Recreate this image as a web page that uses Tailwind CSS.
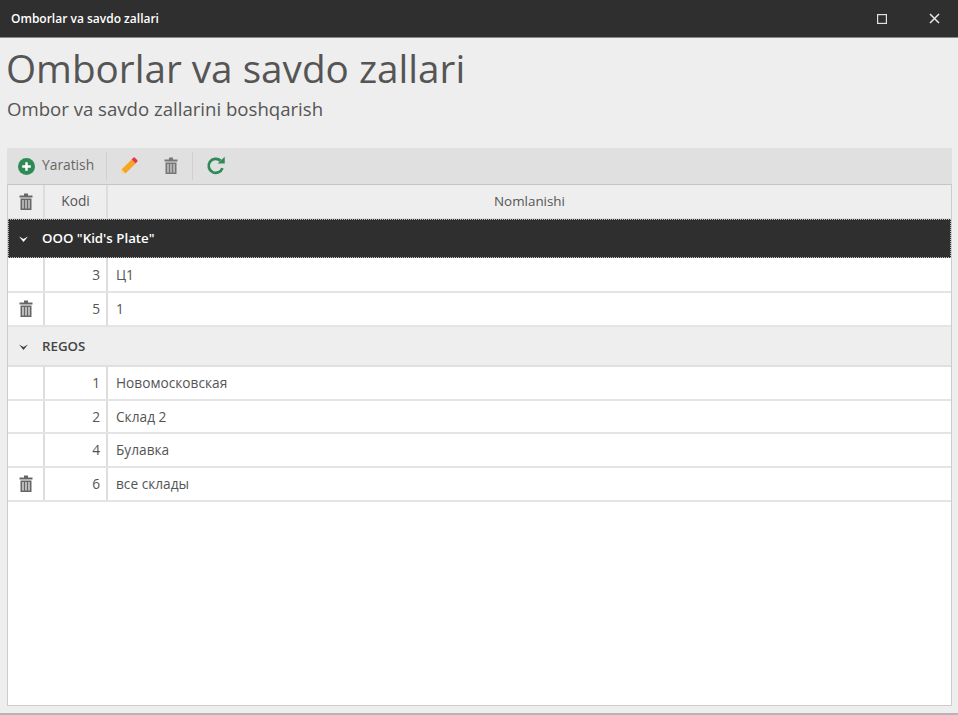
<!DOCTYPE html>
<html lang="en">
<head>
  <meta charset="UTF-8" />
  <title>Omborlar va savdo zallari</title>
  <script src="https://cdn.jsdelivr.net/npm/@tailwindcss/browser@4"></script>
</head>
<body class="w-[958px] h-[715px] overflow-hidden bg-[#eeeeee] font-['Open_Sans','Noto_Sans',sans-serif] text-[#555555] flex flex-col">
  <!-- title bar -->
  <div class="h-[38px] shrink-0 bg-[#2f2f2f] border-b border-[#8a8a8a] flex items-center justify-between pl-[11px] pr-[18px]">
    <span class="text-[12px] font-semibold text-white">Omborlar va savdo zallari</span>
    <div class="flex items-center gap-[42px]">
      <svg width="10" height="10" viewBox="0 0 10 10" fill="none" stroke="#e0e0e0" stroke-width="1.2"><rect x="0.6" y="0.6" width="8.8" height="8.8"/></svg>
      <svg width="11" height="11" viewBox="0 0 11 11" fill="none" stroke="#e8e8e8" stroke-width="1.5"><path d="M1 1l9 9M10 1l-9 9"/></svg>
    </div>
  </div>

  <div class="flex-1 flex flex-col pl-[7px] pr-[6px] min-h-0">
    <h1 class="text-[38.7px] leading-[52px] mt-[4px] -ml-[1px] text-[#555555]">Omborlar va savdo zallari</h1>
    <p class="text-[18.6px] leading-[26px] mt-[2px] text-[#555555]">Ombor va savdo zallarini boshqarish</p>

    <!-- toolbar -->
    <div class="mt-[26px] h-[36px] shrink-0 bg-[#e0e0e0] flex items-center text-[13.8px]">
      <div class="w-[100px] h-[28px] flex items-center pl-[11px] gap-[7px] border-r border-[#d0d0d0]">
        <svg width="17" height="17" viewBox="0 0 17 17"><circle cx="8.5" cy="8.5" r="8.5" fill="#2e8b57"/><path d="M8.5 4.2v8.6M4.2 8.5h8.6" stroke="#fff" stroke-width="2.4"/></svg>
        <span class="text-[#666666] pb-[2px]">Yaratish</span>
      </div>
      <div class="w-[86px] h-[28px] flex items-center pl-[12px] gap-[25px] border-r border-[#d0d0d0]">
        <svg width="20" height="20" viewBox="0 0 20 20"><path d="M1.5 18.5l1-5 4 4z" fill="#f0d9a8"/><path d="M2.5 13.5L12.6 3.4l4 4L6.5 17.5z" fill="#f5a623"/><path d="M12.6 3.4l1.6-1.6a1.2 1.2 0 0 1 1.7 0l2.3 2.3a1.2 1.2 0 0 1 0 1.7l-1.6 1.6z" fill="#e8334a"/></svg>
        <svg width="14" height="18" viewBox="0 0 14 18"><path d="M5 1.5h4M0.5 3.5h13" stroke="#777" stroke-width="2"/><path d="M1.5 5.5h11V17h-11z" fill="#777"/><path d="M4 7v8.5M7 7v8.5M10 7v8.5" stroke="#e0e0e0" stroke-width="1.1"/></svg>
      </div>
      <div class="pl-[13px] flex items-center">
        <svg width="20" height="20" viewBox="0 0 19 19" fill="none"><path d="M15.6 11.5A6.7 6.7 0 1 1 13.8 4.4" stroke="#2e8b57" stroke-width="2.6"/><path d="M11 7.2h6.8V0.6z" fill="#2e8b57"/></svg>
      </div>
    </div>

    <!-- grid -->
    <div class="h-[522px] shrink-0 bg-white border border-[#cccccc] border-t-[#c4c4c4] text-[13.7px] text-[#555555]">
      <div class="h-[34px] flex bg-[#eeeeee] border-b border-[#dddddd]">
        <div class="w-[37px] border-r-[2px] border-[#dddddd] flex items-center justify-center">
          <svg width="14" height="18" viewBox="0 0 14 18"><path d="M5 1.5h4M0.5 3.5h13" stroke="#666" stroke-width="2"/><path d="M1.5 5.5h11V17h-11z" fill="#666"/><path d="M4 7v8.5M7 7v8.5M10 7v8.5" stroke="#eee" stroke-width="1.1"/></svg>
        </div>
        <div class="w-[63px] border-r-[2px] border-[#dddddd] flex items-center justify-center">Kodi</div>
        <div class="flex-1 flex items-center justify-center text-[13.4px]">Nomlanishi</div>
      </div>

      <div class="h-[39px] bg-[#2f2f2f] border border-dotted border-[#bbbbbb] flex items-center text-white font-semibold text-[13.3px]">
        <svg class="ml-[10px] mr-[14px]" width="9" height="6" viewBox="0 0 9 6"><path d="M0 0.5L4.5 3 9 0.5 4.5 6z" fill="#ffffff"/></svg>
        <span>OOO "Kid's Plate"</span>
      </div>
      <div class="h-[35px] flex border-b-[2px] border-[#e4e4e4]">
        <div class="w-[37px] border-r-[2px] border-[#dddddd]"></div>
        <div class="w-[63px] border-r-[2px] border-[#dddddd] flex items-center justify-end pr-[6px] pt-[1px]">3</div>
        <div class="flex-1 flex items-center pl-[8px] pt-[1px]">Ц1</div>
      </div>
      <div class="h-[34px] flex border-b-[2px] border-[#e4e4e4]">
        <div class="w-[37px] border-r-[2px] border-[#dddddd] flex items-center justify-center">
          <svg width="14" height="18" viewBox="0 0 14 18"><path d="M5 1.5h4M0.5 3.5h13" stroke="#666" stroke-width="2"/><path d="M1.5 5.5h11V17h-11z" fill="#666"/><path d="M4 7v8.5M7 7v8.5M10 7v8.5" stroke="#fff" stroke-width="1.1"/></svg>
        </div>
        <div class="w-[63px] border-r-[2px] border-[#dddddd] flex items-center justify-end pr-[6px] pt-[1px]">5</div>
        <div class="flex-1 flex items-center pl-[8px] pt-[1px]">1</div>
      </div>

      <div class="h-[40px] bg-[#eeeeee] border-b-[2px] border-[#e0e0e0] flex items-center pt-[1px] font-semibold text-[13.3px] text-[#444444]">
        <svg class="ml-[11px] mr-[14px]" width="9" height="6" viewBox="0 0 9 6"><path d="M0 0.5L4.5 3 9 0.5 4.5 6z" fill="#444444"/></svg>
        <span>REGOS</span>
      </div>
      <div class="h-[34px] flex border-b-[2px] border-[#e4e4e4]">
        <div class="w-[37px] border-r-[2px] border-[#dddddd]"></div>
        <div class="w-[63px] border-r-[2px] border-[#dddddd] flex items-center justify-end pr-[6px] pt-[1px]">1</div>
        <div class="flex-1 flex items-center pl-[8px] pt-[1px]">Новомосковская</div>
      </div>
      <div class="h-[33px] flex border-b-[2px] border-[#e4e4e4]">
        <div class="w-[37px] border-r-[2px] border-[#dddddd]"></div>
        <div class="w-[63px] border-r-[2px] border-[#dddddd] flex items-center justify-end pr-[6px] pt-[1px]">2</div>
        <div class="flex-1 flex items-center pl-[8px] pt-[1px]">Склад 2</div>
      </div>
      <div class="h-[34px] flex border-b-[2px] border-[#e4e4e4]">
        <div class="w-[37px] border-r-[2px] border-[#dddddd]"></div>
        <div class="w-[63px] border-r-[2px] border-[#dddddd] flex items-center justify-end pr-[6px] pt-[1px]">4</div>
        <div class="flex-1 flex items-center pl-[8px] pt-[1px]">Булавка</div>
      </div>
      <div class="h-[34px] flex border-b-[2px] border-[#e4e4e4]">
        <div class="w-[37px] border-r-[2px] border-[#dddddd] flex items-center justify-center">
          <svg width="14" height="18" viewBox="0 0 14 18"><path d="M5 1.5h4M0.5 3.5h13" stroke="#666" stroke-width="2"/><path d="M1.5 5.5h11V17h-11z" fill="#666"/><path d="M4 7v8.5M7 7v8.5M10 7v8.5" stroke="#fff" stroke-width="1.1"/></svg>
        </div>
        <div class="w-[63px] border-r-[2px] border-[#dddddd] flex items-center justify-end pr-[6px] pt-[1px]">6</div>
        <div class="flex-1 flex items-center pl-[8px] pt-[1px]">все склады</div>
      </div>
    </div>
  </div>
  <div class="h-[2px] shrink-0 bg-[#b5b5b5]"></div>
</body>
</html>
